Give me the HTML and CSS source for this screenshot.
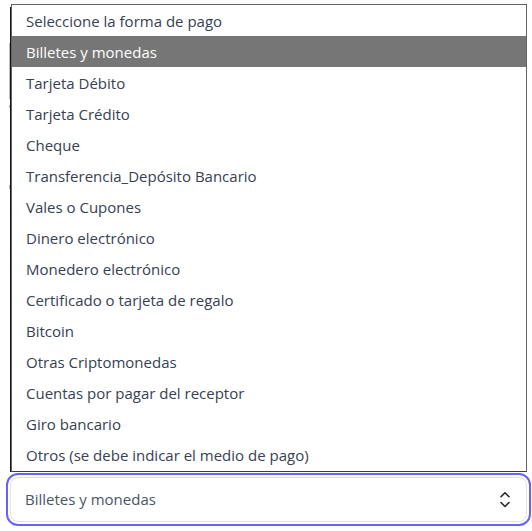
FILE: index.html
```html
<!DOCTYPE html>
<html lang="es">
<head>
<meta charset="utf-8">
<meta name="viewport" content="width=device-width, initial-scale=1">
<title>Forma de pago</title>
<link rel="stylesheet" href="styles.css">
</head>
<body>
<main class="field">
  <ul class="options" role="listbox" aria-label="Forma de pago">
    <li class="option" role="option">Seleccione la forma de pago</li>
    <li class="option option-active" role="option" aria-selected="true">Billetes y monedas</li>
    <li class="option" role="option">Tarjeta Débito</li>
    <li class="option" role="option">Tarjeta Crédito</li>
    <li class="option" role="option">Cheque</li>
    <li class="option" role="option">Transferencia_Depósito Bancario</li>
    <li class="option" role="option">Vales o Cupones</li>
    <li class="option" role="option">Dinero electrónico</li>
    <li class="option" role="option">Monedero electrónico</li>
    <li class="option" role="option">Certificado o tarjeta de regalo</li>
    <li class="option" role="option">Bitcoin</li>
    <li class="option" role="option">Otras Criptomonedas</li>
    <li class="option" role="option">Cuentas por pagar del receptor</li>
    <li class="option" role="option">Giro bancario</li>
    <li class="option" role="option">Otros (se debe indicar el medio de pago)</li>
  </ul>
  <div class="control">
    <select class="select" aria-label="Forma de pago">
      <option>Seleccione la forma de pago</option>
      <option selected>Billetes y monedas</option>
      <option>Tarjeta Débito</option>
      <option>Tarjeta Crédito</option>
      <option>Cheque</option>
      <option>Transferencia_Depósito Bancario</option>
      <option>Vales o Cupones</option>
      <option>Dinero electrónico</option>
      <option>Monedero electrónico</option>
      <option>Certificado o tarjeta de regalo</option>
      <option>Bitcoin</option>
      <option>Otras Criptomonedas</option>
      <option>Cuentas por pagar del receptor</option>
      <option>Giro bancario</option>
      <option>Otros (se debe indicar el medio de pago)</option>
    </select>
    <svg class="chevrons" viewBox="0 0 12 18" aria-hidden="true">
      <path d="M2 5.7 L6 1.7 L10 5.7 M2 11.5 L6 15.5 L10 11.5"/>
    </svg>
  </div>
</main>
</body>
</html>
```
FILE: styles.css
```css
* {
  box-sizing: border-box;
}

body {
  margin: 0;
  background: #fff;
  color: #374151;
  font-family: "Segoe UI", "Open Sans", "Noto Sans", sans-serif;
  font-size: 15px;
}

.field {
  padding: 4px 5px 5px 10px;
}

.options {
  position: relative;
  margin: 0 0 5px 1px;
  padding: 0 0 1px;
  list-style: none;
  background: #fff;
  border: 1px solid #636363;
  border-bottom-color: #3c3c3c;
}

/* Dark edge along the left side of the list */
.options::before {
  content: "";
  position: absolute;
  top: 2px;
  bottom: -1px;
  left: -2px;
  width: 1px;
  background: #151515;
}

/* Edges of the fields behind the list */
.options::after {
  content: "";
  position: absolute;
  top: 38px;
  left: -3px;
  width: 1px;
  height: 146px;
  background: linear-gradient(#bbb 0 56px, transparent 56px 62px, #bbb 62px 65px, transparent 65px 142px, #bbb 142px);
}

.option {
  padding: 2px 14px 0;
  line-height: 29px;
}

.option-active {
  background: #767676;
  color: #fff;
}

.control {
  display: grid;
  align-items: center;
}

.select,
.chevrons {
  grid-area: 1 / 1;
}

.select {
  appearance: none;
  width: 100%;
  height: 45px;
  margin: 0;
  padding: 0 40px 2px 14px;
  border: 1px solid #e0e1e5;
  border-radius: 8px;
  outline: 2px solid #6662fa;
  outline-offset: 2px;
  background: #fff;
  color: #4b5563;
  font: inherit;
}

.chevrons {
  justify-self: end;
  width: 12px;
  height: 18px;
  margin-right: 16px;
  fill: none;
  stroke: #262626;
  stroke-width: 1.6;
  stroke-linecap: round;
  stroke-linejoin: round;
  pointer-events: none;
}
```
